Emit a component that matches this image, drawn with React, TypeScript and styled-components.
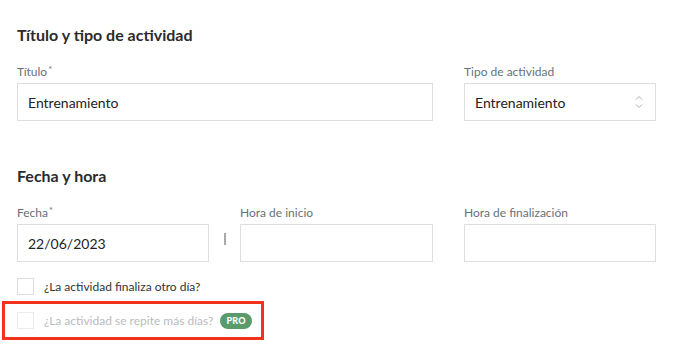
import React from 'react'
import styled, { createGlobalStyle } from 'styled-components'

const GlobalStyle = createGlobalStyle`
  html, body {
    margin: 0;
    padding: 0;
    background: #ffffff;
    font-family: Lato, 'Noto Sans', sans-serif;
    color: #2b2b2b;
  }
`

const Page = styled.div`
  width: 677px;
  height: 344px;
  box-sizing: border-box;
  padding: 25px 0 0 17px;
  overflow: hidden;
`

const Section = styled.section<{ spaced?: boolean }>`
  margin-top: ${(props) => (props.spaced ? '45px' : '0')};
`

const SectionTitle = styled.h2`
  margin: 0 0 17px;
  font-size: 16px;
  line-height: 20px;
  font-weight: 700;
  color: #2b2b2b;
`

const FieldGrid = styled.div`
  display: grid;
  grid-template-columns: 192px 31px 193px 31px 192px;
  align-items: end;
`

const Field = styled.label<{ span?: string }>`
  display: flex;
  flex-direction: column;
  grid-column: ${(props) => props.span || 'auto'};
`

const LabelText = styled.span`
  font-size: 12px;
  line-height: 15px;
  color: #66727b;
  margin-bottom: 4px;

  sup {
    font-size: 9px;
    vertical-align: 3px;
    margin-left: 1px;
  }
`

const Input = styled.div`
  box-sizing: border-box;
  height: 38px;
  border: 1px solid #dedede;
  padding: 0 12px 0 10px;
  display: flex;
  align-items: center;
  justify-content: space-between;
  font-size: 14px;
  color: #222;
`

const Separator = styled.div`
  grid-column: 2;
  align-self: end;
  display: flex;
  justify-content: center;
  padding-bottom: 17px;

  &::before {
    content: '';
    width: 2px;
    height: 12px;
    background: #a9a9a9;
  }
`

const Checks = styled.div`
  margin-top: 16px;
  display: flex;
  flex-direction: column;
  align-items: flex-start;
`

const CheckRow = styled.div<{ highlighted?: boolean; muted?: boolean }>`
  display: flex;
  align-items: center;
  gap: 10px;
  height: ${(props) => (props.highlighted ? '33px' : '17px')};
  margin: ${(props) => (props.highlighted ? '6px 0 0 -15px' : '0')};
  padding: ${(props) => (props.highlighted ? '0 9px 0 12px' : '0')};
  border: ${(props) => (props.highlighted ? '3px solid #f3321e' : 'none')};
  font-size: 12px;
  color: ${(props) => (props.muted ? '#b9bcbf' : '#333')};
`

const Box = styled.span<{ muted?: boolean }>`
  box-sizing: border-box;
  width: 17px;
  height: 17px;
  border: 1px solid ${(props) => (props.muted ? '#ececec' : '#dcdcdc')};
  background: #fff;
  flex: none;
`

const ProBadge = styled.span`
  background: #5b9a6b;
  color: #fff;
  font-size: 9px;
  font-weight: 900;
  letter-spacing: 0.2px;
  border-radius: 8px;
  height: 16px;
  padding: 0 6px;
  display: inline-flex;
  align-items: center;
  margin-left: -3px;
`

function Chevrons() {
  return (
    <svg width="8" height="14" viewBox="0 0 8 14" fill="none">
      <path d="M1 4.5 L4 1.5 L7 4.5" stroke="#b0b0b0" strokeWidth="1" />
      <path d="M1 9.5 L4 12.5 L7 9.5" stroke="#b0b0b0" strokeWidth="1" />
    </svg>
  )
}

export default function App() {
  return (
    <Page>
      <GlobalStyle />
      <Section>
        <SectionTitle>Título y tipo de actividad</SectionTitle>
        <FieldGrid>
          <Field span="1 / 4">
            <LabelText>
              Título<sup>*</sup>
            </LabelText>
            <Input>Entrenamiento</Input>
          </Field>
          <Field span="5">
            <LabelText>Tipo de actividad</LabelText>
            <Input>
              Entrenamiento
              <Chevrons />
            </Input>
          </Field>
        </FieldGrid>
      </Section>

      <Section spaced>
        <SectionTitle>Fecha y hora</SectionTitle>
        <FieldGrid>
          <Field span="1">
            <LabelText>
              Fecha<sup>*</sup>
            </LabelText>
            <Input>22/06/2023</Input>
          </Field>
          <Separator />
          <Field span="3">
            <LabelText>Hora de inicio</LabelText>
            <Input />
          </Field>
          <Field span="5">
            <LabelText>Hora de finalización</LabelText>
            <Input />
          </Field>
        </FieldGrid>
      </Section>

      <Checks>
        <CheckRow>
          <Box />
          ¿La actividad finaliza otro día?
        </CheckRow>
        <CheckRow highlighted muted>
          <Box muted />
          ¿La actividad se repite más días?
          <ProBadge>PRO</ProBadge>
        </CheckRow>
      </Checks>
    </Page>
  )
}
